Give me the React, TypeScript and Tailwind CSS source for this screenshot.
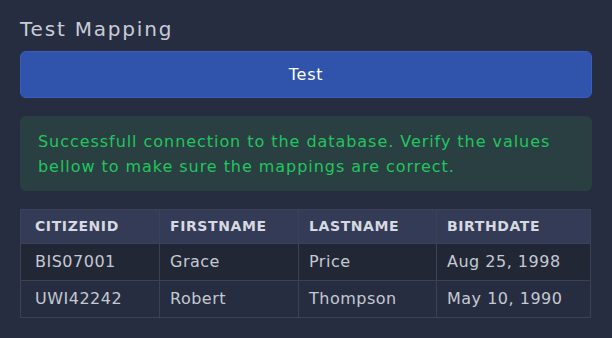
import React from "react";

const rows = [
  ["BIS07001", "Grace", "Price", "Aug 25, 1998"],
  ["UWI42242", "Robert", "Thompson", "May 10, 1990"],
];

export default function App() {
  return (
    <div
      className="w-[612px] h-[338px] bg-[#272d41] px-5 pt-[15px] overflow-hidden"
      style={{ fontFamily: '"DejaVu Sans", sans-serif' }}
    >
      <h2 className="text-[20px] leading-[28px] tracking-[1.8px] text-[#c8ccd6]">Test Mapping</h2>
      <button className="mt-2 w-full h-[47px] rounded-md bg-[#3053ab] border border-[#3a5cc0] text-white text-[16px] tracking-[0.8px]">
        Test
      </button>
      <div className="mt-[18px] rounded-md bg-[#293f42] px-[18px] pt-[13px] pb-[12px] text-[16px] leading-[25px] tracking-[0.95px] text-[#22c55e]">
        Successfull connection to the database. Verify the values bellow to make sure the mappings are correct.
      </div>
      <table className="mt-[18px] w-[571px] border-collapse border border-[#3b4258] table-fixed">
        <thead>
          <tr className="bg-[#343b56] h-[34px]">
            {["CITIZENID", "FIRSTNAME", "LASTNAME", "BIRTHDATE"].map((h, i) => (
              <th
                key={h}
                className={`border border-[#3b4258] text-left text-[14px] font-bold tracking-[0.6px] text-[#d6d9e0] ${
                  i === 0 ? "pl-[14px] pr-2" : "pl-[10px] pr-2"
                } ${i === 3 ? "w-[154px]" : i === 2 ? "w-[138px]" : "w-[139px]"}`}
              >
                {h}
              </th>
            ))}
          </tr>
        </thead>
        <tbody>
          {rows.map((r, ri) => (
            <tr key={ri} className={`h-[37px] ${ri === 0 ? "bg-[#222736]" : "bg-[#272d41]"}`}>
              {r.map((c, ci) => (
                <td
                  key={ci}
                  className={`border border-[#3b4258] text-[16px] tracking-[0.5px] text-[#c5c9d2] ${
                    ci === 0 ? "pl-[14px] pr-2" : "pl-[10px] pr-2"
                  }`}
                >
                  {c}
                </td>
              ))}
            </tr>
          ))}
        </tbody>
      </table>
    </div>
  );
}
